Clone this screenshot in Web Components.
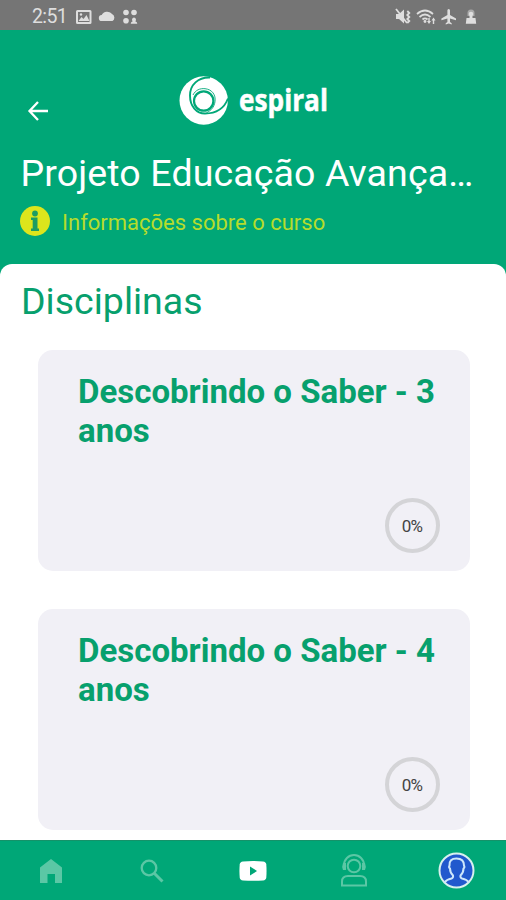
<!DOCTYPE html>
<html lang="pt-BR">
<head>
<meta charset="utf-8">
<title>Espiral</title>
<style>
html,body{margin:0;height:100%}
body{font-family:Roboto,"Liberation Sans",sans-serif;background:#fff;overflow:hidden}
</style>
</head>
<body>
<espiral-app></espiral-app>
<script>
const define=(name,html)=>customElements.define(name,class extends HTMLElement{
  constructor(){super();const t=document.createElement('template');t.innerHTML=html;
    this.attachShadow({mode:'open'}).append(t.content.cloneNode(true));}
});

define('status-bar',`<style>
:host{display:flex;align-items:center;justify-content:space-between;height:30px;background:#757575;color:#dedede;box-sizing:border-box;padding:3px 25px 0 32px}
div{display:flex;align-items:center}
span{font-size:19.500px;line-height:28px;width:44px;letter-spacing:-.6px}
svg{display:block;fill:#dedede}
</style>
<div><span>2:51</span>
<svg width="64" height="18" viewBox="0 0 64 18"><path fill-rule="evenodd" d="M1.500 2h12.500a1.500 1.500 0 0 1 1.500 1.500v11a1.500 1.500 0 0 1-1.500 1.500h-12.500a1.500 1.500 0 0 1-1.500-1.500v-11A1.500 1.500 0 0 1 1.500 2zM2 4v10h11.500V4z"/><path d="M2.500 13l3-4 2 2 3-4 3 6z"/><circle cx="5" cy="6.500" r="1.200"/><path d="M26 13a3 3 0 0 1-.3-6 6 5.500 0 0 1 10.300-1 4 4 0 0 1 .5 7z"/><circle cx="50" cy="4.500" r="2.800"/><circle cx="58" cy="4.500" r="2.800"/><circle cx="50" cy="12.800" r="2.800"/><path d="M58 9.500a2.200 2.200 0 0 1 1.300 3.800q2 .7 2 2.400h-6.600q0-1.700 2-2.400A2.200 2.200 0 0 1 58 9.500z"/></svg></div>
<svg width="86" height="18" viewBox="0 0 86 18"><path d="M1 6h3l5-4.500v14L4 11H1z"/><path d="M1 1l11 14M12.300 3l2 2-2 2 2 2-2 2 2 2-2 2" fill="none" stroke="#dedede" stroke-width="1.800"/><g fill="none" stroke="#dedede" stroke-width="1.700"><path d="M22 6q8-7 16 0M24.500 9q5.500-5 11 0M27.500 11.500q2.500-2.300 5 0"/></g><circle cx="30" cy="13.500" r="1.400"/><path d="M34 16l-2-3h1.300v-3h1.400v3H36zM38.500 9.500l2 3h-1.300V16h-1.400v-3.500h-1.300z"/><path d="M53.700 1c.8 0 1.300.8 1.300 1.500V7l6 3.500v1.700l-6-1.700v3.500l1.700 1.200v1.200l-3-.8-3 .8v-1.200l1.700-1.200v-3.500l-6 1.700v-1.700l6-3.500V2.500c0-.7.500-1.500 1.300-1.500z"/><path d="M72.500 8V5a3.500 3.500 0 0 1 7 0v3" fill="#aaa"/><circle cx="76" cy="6" r="2.300"/><path d="M74.500 8h3v2h3l.7 5.800H70.800l.7-5.800h3z"/></svg>`);

define('brand-logo',`<style>
:host{display:grid;grid-template-columns:60px 92px;height:52px}svg{display:block}
span{display:block;font:700 30px/44px "Open Sans","Noto Sans",sans-serif;color:#fff;-webkit-text-stroke:.5px #fff;transform:scaleX(.875);transform-origin:0 0;white-space:nowrap;padding-top:3px}
</style>
<svg width="52" height="52" viewBox="0 0 52 52"><circle cx="24.700" cy="25.500" r="24.200" fill="#fff"/>
<g fill="none" stroke="#00a777"><path d="M31 2.500C19 2 11 10 11 20.500c0 11 6.500 18 15 18C36 38.500 45 34 49 23.500" stroke-width="1.900"/><circle cx="24.700" cy="26" r="9.700" stroke-width="2.200"/><path d="M14 20C16.500 15 21 13.200 26 13.700c7 .7 11 6 10 13-.8 5.500-4 9-8.500 11" stroke-width=".9"/></g></svg><span>espiral</span>`);

define('course-header',`<style>
:host{display:block;height:248px;background:#00a777;color:#fff;box-sizing:border-box;padding:44.500px 21px 0}
.top{display:grid;grid-template-columns:158px 152px 1fr;height:75.500px}
.back{margin:25px 0 0 6px;display:block}
h1{font-size:37.500px;font-weight:400;line-height:46px;margin:0 0 0 -.5px;white-space:nowrap;letter-spacing:.12px}
.info{display:flex;align-items:center;gap:12px;margin-top:8.500px;color:#b6dc2c;font-size:22px;line-height:30px;margin-left:-1px;white-space:nowrap}
.info svg{display:block}
.info span{padding-top:3px}
</style>
<div class="top"><svg class="back" width="22" height="22" viewBox="0 0 22 22"><path d="M21 11H3M11 2L2.500 11l8.500 9" fill="none" stroke="#fff" stroke-width="2.300"/></svg><brand-logo></brand-logo></div>
<h1><slot name="title"></slot></h1>
<div class="info"><svg width="30" height="30" viewBox="0 0 30 30"><circle cx="15" cy="15" r="15" fill="#dce51c"/><g fill="#1d9c62"><circle cx="15" cy="7.500" r="2.900"/><path d="M11 11.500h6.500v11H19V25h-8v-2.500h1.700v-8.500H11z"/></g></svg><span><slot name="info"></slot></span></div>`);

define('progress-ring',`<style>
:host{display:flex;align-items:center;justify-content:center;width:55px;height:55px;box-sizing:border-box;border:4px solid #d4d4d7;border-radius:50%;font-size:17px;font-weight:400;color:#444;letter-spacing:-.8px;padding:1px 1px 0 0}
</style><slot></slot>`);

define('course-card',`<style>
:host{display:flex;flex-direction:column;justify-content:space-between;width:432px;height:221px;box-sizing:border-box;border-radius:15px;background:#f1f0f6;padding:22px 30px 18px 40px}
h3{margin:0 -10px 0 0;color:#07a06d;font-size:33px;font-weight:700;line-height:39px}
progress-ring{align-self:flex-end}
</style><h3><slot></slot></h3><progress-ring>0%</progress-ring>`);

define('course-list',`<style>
:host{display:block;flex:1;min-height:0;background:#fff;border-radius:12px 12px 0 0;margin-top:-14px;overflow:hidden}
h2{margin:0;padding:14px 21px 0;font-size:37.500px;font-weight:400;line-height:46px;color:#07a06d}
.list{display:grid;gap:38px;padding:26px 0 0 38px}
</style><h2><slot name="heading"></slot></h2><div class="list"><slot></slot></div>`);

define('tab-bar',`<style>
:host{display:grid;grid-template-columns:repeat(5,1fr);place-items:center;height:60px;background:#00a777;box-sizing:border-box;border-top:1px solid #159269}
svg{display:block}
svg:last-child{margin-left:2px}
</style>
<svg width="24" height="26" viewBox="0 0 24 26"><path d="M1 9.500L12 1l11 8.500V25h-7v-9H8.500v9H1z" fill="#5bc7a5"/></svg>
<svg width="24" height="24" viewBox="0 0 24 24"><g fill="none" stroke="#5bc7a5"><circle cx="9" cy="9" r="7.300" stroke-width="2.300"/><path d="M14 14l8.500 8.500" stroke-width="3"/></g></svg>
<svg width="28" height="20" viewBox="0 0 28 20"><path d="M4 .5Q14-.5 24 .5q3 .3 3.300 3 .5 6.500 0 13-.3 2.700-3.300 3-10 .6-20 0-3-.3-3.300-3-.5-6.500 0-13Q1 .8 4 .5z" fill="#fff"/><path d="M11 5.500l7 4.500-7 4.500z" fill="#00a777"/></svg>
<svg width="28" height="34" viewBox="0 0 28 34"><g fill="none" stroke="#5bc7a5" stroke-width="2"><circle cx="14" cy="12" r="6.300"/><path d="M4 11a10 10 0 0 1 20 0M2 31.500v-4q0-5.500 6-5.500h12q6 0 6 5.500v4z"/></g><path d="M3 9h3v7H3q-1.500-3.500 0-7zM22 9h3q1.500 3.500 0 7h-3z" fill="#5bc7a5"/></svg>
<svg width="37" height="37" viewBox="0 0 37 37"><circle cx="18.500" cy="18.500" r="17" fill="#2159cd" stroke="#d7f0ee" stroke-width="2"/><path d="M6.500 30.500q2-3 7-4 2-.7 1.500-3-3-3-3-7-1.500-1-.5-3-.5-7 7-7t7.500 7q1 2-.5 3 0 4-3 7-.5 2.300 1.500 3 5 1 7 4" fill="none" stroke="#cee7fb" stroke-width="2"/></svg>`);

define('espiral-app',`<style>
:host{display:flex;flex-direction:column;height:100vh}
</style>
<status-bar></status-bar>
<course-header><span slot="title">Projeto Educação Avança…</span><span slot="info">Informações sobre o curso</span></course-header>
<course-list><span slot="heading">Disciplinas</span><course-card>Descobrindo o Saber - 3 anos</course-card><course-card>Descobrindo o Saber - 4 anos</course-card></course-list>
<tab-bar></tab-bar>`);
</script>
</body>
</html>
